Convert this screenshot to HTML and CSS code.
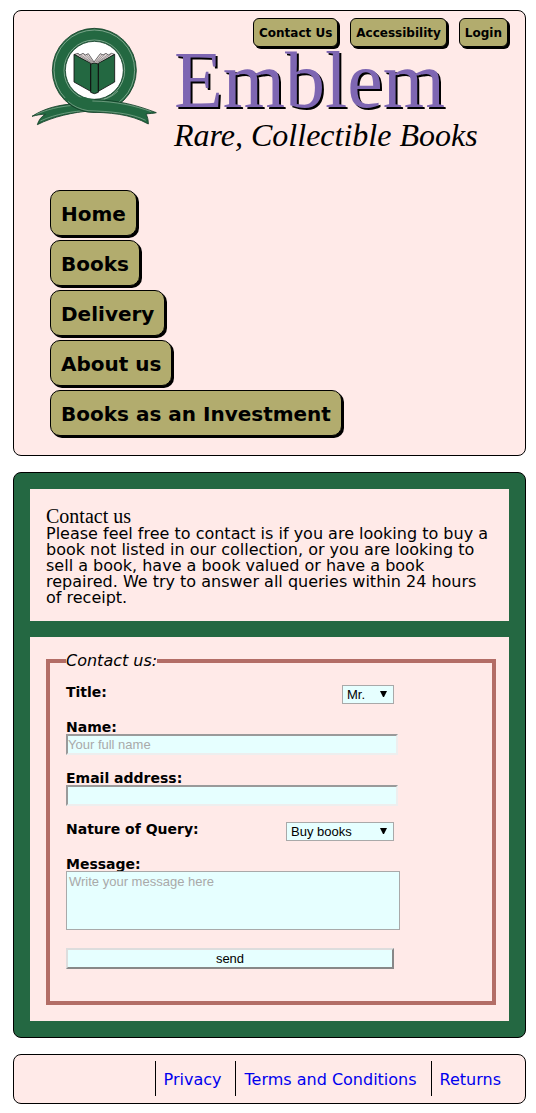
FILE: index.html
```html
<!DOCTYPE html>
<html lang="en">
<head>
<meta charset="utf-8">
<meta name="viewport" content="width=device-width, initial-scale=1">
<title>Emblem - Contact us</title>
<link rel="stylesheet" href="styles.css">
</head>
<body>
<header class="site-header">
  <div class="brand">
    <svg class="logo" viewBox="64 62 378 300" role="img" aria-label="Emblem logo">
      <g fill="#236841" stroke="#123d26" stroke-width="2.5" stroke-linejoin="round">
        <path d="M67 333C105 309 142 300 185 296L242 317C193 320 130 334 83 358C87 345 94 334 107 327C95 326 80 330 67 333Z"/>
        <path d="M80 327C112 312 149 304 190 300M92 347C140 325 190 318 236 315" fill="none" stroke="#8fb09a" stroke-width="2"/>
        <circle cx="254" cy="195" r="126"/>
        <circle cx="254" cy="195" r="121" fill="none" stroke="#a9c2b0" stroke-width="2"/>
        <circle cx="254" cy="195" r="91" fill="none" stroke="#a9c2b0" stroke-width="2"/>
        <circle cx="254" cy="195" r="87" fill="#fff"/>
        <path stroke="none" d="M163 277C190 283 208 277 220 275L254 283C325 284 385 301 440 322C430 325 420 324 409 326C414 335 416 344 416 356C360 325 300 322 235 320C205 315 185 304 163 277Z"/>
        <path fill="none" d="M254 283C325 284 385 301 440 322C430 325 420 324 409 326C414 335 416 344 416 356C360 325 300 322 235 320C208 315 190 305 175 293"/>
        <path fill="none" stroke="#8fb09a" stroke-width="2" d="M248 287C320 288 378 302 425 319M408 345C365 323 300 318 235 316C212 312 191 303 175 288M282 282C300 278 316 267 325 257"/>
      </g>
      <path d="M195 147L205 144L211 149L220 144L227 149L236 145L253 170L272 145L280 149L289 144L296 149L305 144L314 147L266 178H243Z" fill="#e8dddd" stroke="#222" stroke-width="2"/>
      <path d="M204 147L244 172M212 147L248 173M222 147L250 172M230 147L252 172M304 147L264 172M296 147L260 173M286 147L258 172M278 147L256 172" stroke="#555" stroke-width="1.5"/>
      <path d="M193 147L243 174V258L193 230ZM315 147L266 174V258L315 230ZM243 176Q254 170 266 176V261Q254 269 243 261Z" fill="#236841" stroke="#111" stroke-width="2.5" stroke-linejoin="round"/>
    </svg>
    <nav class="utility" aria-label="Account">
      <a href="#contact">Contact Us</a>
      <a href="#accessibility">Accessibility</a>
      <a href="#login">Login</a>
    </nav>
    <div class="brand-text">
      <h1>Emblem</h1>
      <p>Rare, Collectible Books</p>
    </div>
  </div>
  <nav class="main-nav" aria-label="Main">
    <a href="#home">Home</a>
    <a href="#books">Books</a>
    <a href="#delivery">Delivery</a>
    <a href="#about">About us</a>
    <a href="#investment">Books as an Investment</a>
  </nav>
</header>

<main class="content" id="contact">
  <section class="panel">
    <h2>Contact us</h2>
    <p>Please feel free to contact is if you are looking to buy a book not listed in our collection, or you are looking to sell a book, have a book valued or have a book repaired. We try to answer all queries within 24 hours of receipt.</p>
  </section>
  <form class="panel contact-form">
    <fieldset>
      <legend>Contact us:</legend>
      <div class="fields">
        <div class="row">
          <label for="title">Title:</label>
          <select id="title" class="short"><option>Mr.</option><option>Mrs.</option><option>Ms.</option></select>
        </div>
        <div class="field">
          <label for="name">Name:</label>
          <input id="name" type="text" placeholder="Your full name">
        </div>
        <div class="field">
          <label for="email">Email address:</label>
          <input id="email" type="email">
        </div>
        <div class="row">
          <label for="query">Nature of Query:</label>
          <select id="query" class="long"><option>Buy books</option><option>Sell books</option></select>
        </div>
        <div class="field">
          <label for="message">Message:</label>
          <textarea id="message" placeholder="Write your message here"></textarea>
        </div>
        <button type="submit">send</button>
      </div>
    </fieldset>
  </form>
</main>

<footer class="site-footer">
  <a href="#privacy">Privacy</a>
  <a href="#terms">Terms and Conditions</a>
  <a href="#returns">Returns</a>
</footer>
</body>
</html>
```
FILE: styles.css
```css
* {
  box-sizing: border-box;
}

body {
  margin: 10px 10px 8px 13px;
  display: flex;
  flex-direction: column;
  gap: 16px;
  background: #fff;
  color: #000;
  font: 16px/16px Verdana, "DejaVu Sans", sans-serif;
}

h1, h2, p {
  margin: 0;
  font-weight: normal;
}

.site-header,
.content,
.site-footer {
  border: 1px solid #000;
  border-radius: 8px;
  background: #ffeae8;
}

.site-header {
  padding: 7px 17px 19px;
}

.brand {
  display: grid;
  grid-template-columns: 126px 1fr;
  grid-template-rows: 30px auto;
  column-gap: 17px;
}

.logo {
  grid-row: 1 / 3;
  width: 126px;
  height: 100px;
  margin-top: 8px;
}

.utility {
  display: flex;
  justify-content: flex-end;
  align-items: flex-start;
  gap: 12px;
}

.utility a,
.main-nav a {
  border: 1px solid #000;
  background: #b2ac6e;
  box-shadow: 2px 2px 0 #000;
  color: #000;
  font-weight: bold;
  text-decoration: none;
}

.utility a {
  padding: 1px 5px 0;
  border-radius: 6px;
  font-size: 12px;
  line-height: 26px;
}

.brand-text {
  font-family: "Liberation Serif", "Times New Roman", serif;
}

.brand-text h1 {
  color: #7e66b2;
  font-size: 80px;
  line-height: 64px;
  text-shadow: 2px 2px 0 #000;
}

.brand-text p {
  font-size: 32px;
  font-style: italic;
  line-height: 46px;
}

.main-nav {
  display: flex;
  flex-direction: column;
  align-items: flex-start;
  gap: 4px;
  margin-top: 32px;
  padding-left: 19px;
}

.main-nav a {
  padding: 2px 10px 0;
  border-radius: 10px;
  font-size: 20px;
  line-height: 42px;
}

.content {
  display: flex;
  flex-direction: column;
  gap: 16px;
  padding: 16px;
  background: #246842;
}

.panel {
  padding: 17px 16px 15px;
  background: #ffeae8;
}

.contact-form {
  padding: 16px 13px 16px 16px;
}

.panel h2 {
  font: 20px/20px "Liberation Serif", "Times New Roman", serif;
}

fieldset {
  margin: 0;
  padding: 16px 16px 32px;
  border: 4px solid #b36d66;
}

legend {
  padding: 0;
  font-style: italic;
}

.fields {
  display: flex;
  flex-direction: column;
  gap: 16px;
}

.row {
  display: flex;
  justify-content: space-between;
  width: 80%;
}

.field {
  display: flex;
  flex-direction: column;
  align-items: flex-start;
}

label {
  font-size: 14px;
  font-weight: bold;
  line-height: 14px;
}

input,
select,
textarea,
button {
  margin: 0;
  border-radius: 0;
  background: #e6ffff;
  color: #000;
  font: 13px/15px "Liberation Sans", Arial, sans-serif;
}

input,
textarea {
  box-sizing: content-box;
  width: 80%;
}

input {
  height: 17px;
  padding: 0;
  border: 2px solid;
  border-color: #9a9a9a #eee #eee #9a9a9a;
}

textarea {
  display: block;
  height: 53px;
  padding: 2px;
  border: 1px solid #a9a9a9;
  resize: none;
}

::placeholder {
  color: #a9a9a9;
  opacity: 1;
}

select {
  appearance: none;
  height: 19px;
  padding: 0 4px;
  border: 1px solid #a9a9a9;
  background: #e6ffff url("data:image/svg+xml,%3Csvg xmlns='http://www.w3.org/2000/svg' width='7' height='6'%3E%3Cpath d='M0 0h7L4 6H3z'/%3E%3C/svg%3E") no-repeat right 6px top 5px;
}

.short {
  width: 52px;
}

.long {
  width: 108px;
}

button {
  width: 80%;
  height: 21px;
  margin-top: 2px;
  padding: 0;
  border: 2px solid;
  border-color: #ddd #888 #888 #ddd;
}

.site-footer {
  display: flex;
  justify-content: flex-end;
  padding: 6px 10px 7px;
}

.site-footer a {
  padding: 2px 14px 0 8px;
  border-left: 1px solid #000;
  color: #00e;
  line-height: 33px;
  text-decoration: none;
}
```
